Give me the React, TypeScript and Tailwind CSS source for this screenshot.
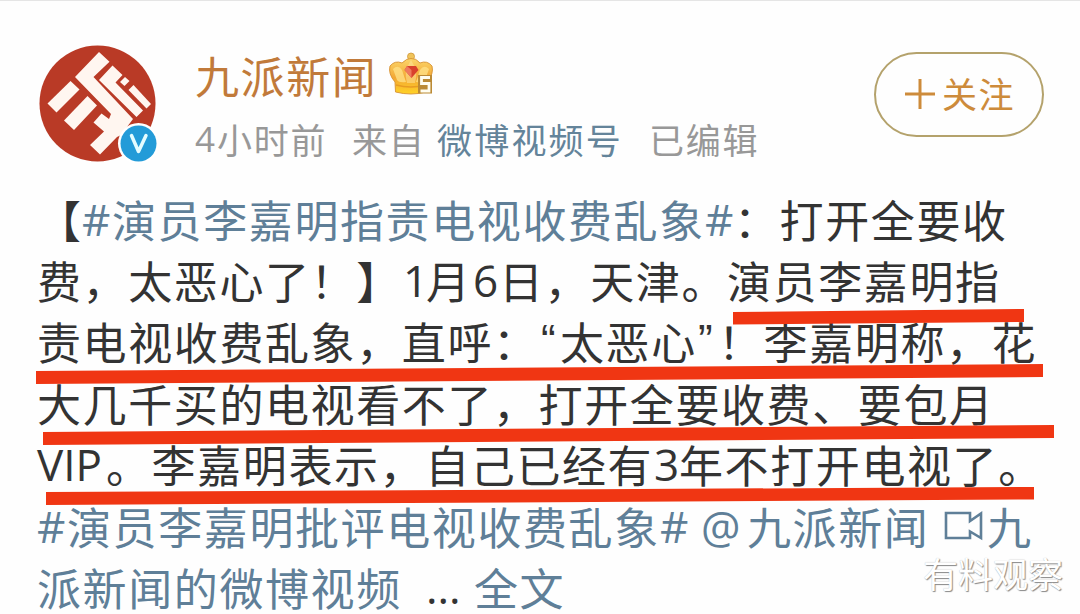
import React from 'react';
import clsx from 'clsx';

type Segment = {
  text?: string;
  width: string;
  link?: boolean;
  latin?: boolean;
  quote?: boolean;
  icon?: boolean;
};

const lines: Segment[][] = [
  [
    { text: '【', width: 'w-[45px]' },
    { text: '#', width: 'w-[30px]', link: true, latin: true },
    { text: '演员李嘉明指责电视收费乱象', width: 'w-[593px]', link: true },
    { text: '#', width: 'w-[29px]', link: true, latin: true },
    { text: '：打开全要收', width: 'w-[300px]' },
  ],
  [
    { text: '费，太恶心了！】', width: 'w-[366px]' },
    { text: '1', width: 'w-[23px]', latin: true },
    { text: '月', width: 'w-[47px]' },
    { text: '6', width: 'w-[26px]', latin: true },
    { text: '日，天津。演员李嘉明指', width: 'w-[520px]' },
  ],
  [
    { text: '责电视收费乱象，直呼：', width: 'w-[504px]' },
    { text: '“', width: 'w-[19px]', quote: true },
    { text: '太恶心', width: 'w-[138px]' },
    { text: '”', width: 'w-[20px]', quote: true },
    { text: '！李嘉明称，花', width: 'w-[330px]' },
  ],
  [{ text: '大几千买的电视看不了，打开全要收费、要包月', width: 'w-[980px]' }],
  [
    { text: 'VIP', width: 'w-[69px]', latin: true },
    { text: '。李嘉明表示，自己已经有', width: 'w-[548px]' },
    { text: '3', width: 'w-[25px]', latin: true },
    { text: '年不打开电视了。', width: 'w-[370px]' },
  ],
  [
    { text: '#', width: 'w-[30px]', link: true, latin: true },
    { text: '演员李嘉明批评电视收费乱象', width: 'w-[593px]', link: true },
    { text: '#', width: 'w-[41px]', link: true, latin: true },
    { text: '@', width: 'w-[46px]', link: true, latin: true },
    { text: '九派新闻', width: 'w-[197px]', link: true },
    { icon: true, width: 'w-[43px]', link: true },
    { text: '九', width: 'w-[46px]', link: true },
  ],
  [
    { text: '派新闻的微博视频', width: 'w-[389px]', link: true },
    { text: '...', width: 'w-[48px]', latin: true },
    { text: '全文', width: 'w-[92px]', link: true },
  ],
];

const Avatar = () => (
  <svg viewBox="0 0 120 120" className="w-[120px] h-[120px]">
    <circle cx="60.500" cy="60.500" r="58" fill="#b93a26" />
    <g fill="#fff6f0">
      <path d="M62 9 L72.500 18.700 L56.500 34 L96 76 L84 92 L80 94 L63 111.500 L53 102 L67 88.500 L56.500 79.500 L64.500 70.500 L72 76 L74 71 L38 34 Z" />
      <path d="M75.500 22.500 L85.500 32 L78.500 39.500 L106 67.500 L99.500 74 L62 37 Z" />
      <path d="M88 34 L92.500 38 L87.500 43 L83 39 Z" />
      <path d="M96.500 42 L114 61 L109.500 65.500 L91.500 47 Z" />
      <path d="M33.500 38 L42.500 46.500 L19.500 69.500 L10.500 60.500 Z" />
      <path d="M50.500 53 L60 62.500 L37 87 L27 77.500 Z" />
    </g>
    <circle cx="101.500" cy="100.500" r="20.500" fill="#fff" />
    <circle cx="101.500" cy="100.500" r="18" fill="#239bd8" />
    <path d="M94.500 92.500 L101.500 108.500 L109 92.500" fill="none" stroke="#e4fcff" strokeWidth="3.500" strokeLinecap="round" strokeLinejoin="round" />
  </svg>
);

const Crown = () => (
  <svg viewBox="0 0 46 44" className="w-[46px] h-[44px] -mt-0.5">
    <defs>
      <linearGradient id="gold" x1="0" y1="0" x2="0" y2="1">
        <stop offset="0" stopColor="#fbd66b" />
        <stop offset="0.550" stopColor="#f3a733" />
        <stop offset="1" stopColor="#ffd326" />
      </linearGradient>
    </defs>
    <circle cx="22" cy="4.500" r="3.500" fill="#f0c45a" stroke="#cf9638" strokeWidth="0.800" />
    <path d="M6.500 40 L6 30 Q-1 22 1 14 Q6 8 13 11 Q18 6 22 6.500 Q27 6 31 11 Q38 8 43 14 Q45 22 38 30 L37 40 Q22 44 6.500 40 Z" fill="url(#gold)" stroke="#d79234" strokeWidth="0.900" />
    <path d="M4 17 Q9 12 13 18 L17 30 Q10 31 8 28 Z M40 17 Q35 12 31 18 L27 30 Q34 31 36 28 Z" fill="#ffe38a" opacity="0.750" />
    <path d="M22 8 Q14 20 18 31 H26 Q30 20 22 8 Z" fill="#ffe7a0" opacity="0.500" />
    <path d="M7 33 Q22 37 36 33" fill="none" stroke="#e89b23" strokeWidth="1.500" />
    <path d="M18 14 H27 L29.500 18 L22.500 26 L15.500 18 Z" fill="#d9412c" />
    <path d="M18 14 L22.500 18 L22.500 26 L15.500 18 Z" fill="#ee7a5d" />
    <path d="M29 23 H43 V41.500 H29 Z" fill="#bb8a35" />
    <path d="M41 25.500 H32.500 V31.500 H40 V39 H31.500" fill="none" stroke="#fffdf0" strokeWidth="2.800" />
  </svg>
);

const VideoIcon = () => (
  <svg viewBox="0 0 40 30" className="w-[40px] h-[30px]">
    <path d="M2 2 H26 V10 L37 2.500 V27 L26 20.500 V27 H2 Z" fill="none" stroke="#5f7f98" strokeWidth="2.600" />
  </svg>
);

const App = () => {
  return (
    <div className="relative w-[1080px] h-[614px] overflow-hidden bg-[#fefefe] border-t border-[#e5e5e5] font-['Noto_Sans_CJK_SC',sans-serif] text-[#333]">
      {/* Author */}
      <header className="flex h-[187px] pt-[42px] pl-[37px]">
        <Avatar />
        <div className="ml-[38px] w-[679px]">
          <div className="flex items-center h-[64px] text-[44px] tracking-[1.6px] text-[#c17a3a]">
            <span className="w-[194px] whitespace-nowrap">九派新闻</span>
            <Crown />
          </div>
          <div className="flex items-center h-[64px] text-[35px] tracking-[1.7px] text-[#989898] whitespace-nowrap">
            <span className="w-[22px] font-['Open_Sans']">4</span>
            <span className="w-[135px]">小时前</span>
            <span className="w-[85px]">来自</span>
            <span className="w-[212px] tracking-[2.2px] text-[#64849a]">微博视频号</span>
            <span>已编辑</span>
          </div>
        </div>
        <button className="mt-[9px] flex items-center justify-center w-[170px] h-[85px] rounded-full border-2 border-[#b4a26c] pb-0.5 pl-0.5 text-[35px] tracking-[1.5px] text-[#cd8b3b]">
          <svg viewBox="0 0 30 30" className="w-[30px] h-[30px] mr-[7px]">
            <path d="M15 0 V30 M0 15 H30" stroke="#cd8b3b" strokeWidth="3" />
          </svg>
          关注
        </button>
      </header>

      {/* Post text */}
      <main className="pl-[37px]">
        {lines.map((line, index) => (
          <p key={index} className="flex items-center h-[61.4px] text-[44px] leading-[48px] tracking-[1.6px] whitespace-nowrap">
            {line.map((segment, i) => (
              <span
                key={i}
                className={clsx(
                  'shrink-0',
                  segment.width,
                  segment.link && 'text-[#5f7f98]',
                  segment.latin && "font-['Open_Sans'] tracking-normal",
                  segment.quote && "font-['Liberation_Sans'] tracking-normal"
                )}
              >
                {segment.icon ? <VideoIcon /> : segment.text}
              </span>
            ))}
          </p>
        ))}
      </main>

      {/* Red marker strokes over the text */}
      <svg viewBox="0 0 1080 614" className="absolute left-0 -top-px w-[1080px] h-[614px]" fill="#f03613">
        <path d="M733 312 L1024 309 V322 L733 324.500 Z" />
        <path d="M36 371 L1043 364 V377 L36 384 Z" />
        <path d="M43 432 L1054 425 V438 L43 445 Z" />
        <path d="M46 492 L1034 487 V499.500 L46 505 Z" />
      </svg>

      <div className="absolute left-[923px] top-[553px] text-[35px] leading-[38px] text-white [text-shadow:1px_1px_1px_#888,0_0_1px_#bbb]">
        有料观察
      </div>
    </div>
  );
};

export default App;
